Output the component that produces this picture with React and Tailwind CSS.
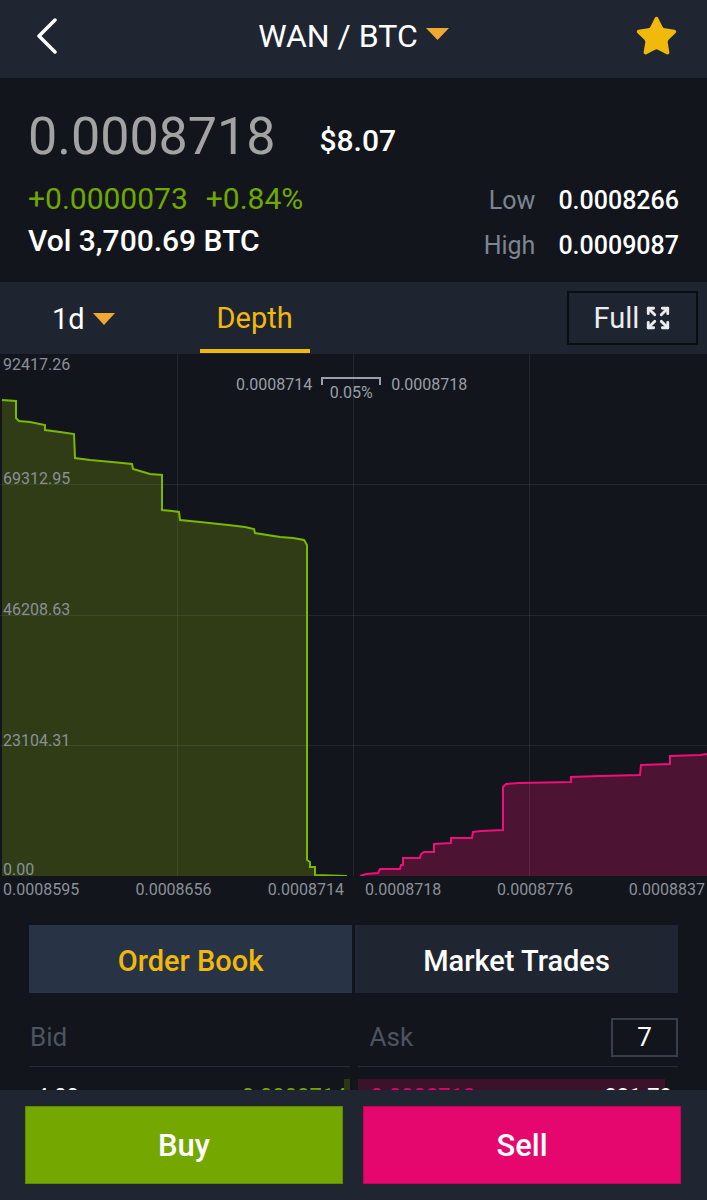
import { Star, Expand } from "lucide-react";

// depth curve points, in page coordinates (chart spans y 354..876)
const BASE = 876;
const bids = [
  [2, 400], [16, 401], [16, 418], [19, 421], [30, 422], [45, 425], [45, 430],
  [60, 432], [74, 434], [75, 458], [90, 460], [112, 462], [132, 464], [133, 469],
  [140, 471], [150, 474], [162, 475], [162, 510], [172, 511], [179, 512],
  [180, 520], [200, 522], [228, 525], [245, 527], [254, 529], [255, 533],
  [280, 537], [293, 538], [304, 540], [307, 545], [307, 860], [310, 862],
  [310, 867], [315, 867], [315, 875], [347, 876],
];
const asks = [
  [360, 876], [366, 874], [378, 873], [380, 869], [400, 869], [401, 865],
  [403, 865], [403, 858], [420, 858], [421, 854], [424, 852], [434, 852],
  [434, 844], [451, 843], [451, 838], [472, 838], [473, 832], [481, 831],
  [503, 830], [503, 787], [506, 784], [520, 783], [571, 782], [571, 777],
  [600, 776], [640, 775], [641, 765], [670, 764], [670, 756], [700, 755],
  [707, 754],
];

const toPath = (pts) => "M" + pts.map((p) => p.join(",")).join(" L");
const toArea = (pts) =>
  toPath(pts) + ` L${pts[pts.length - 1][0]},${BASE} L${pts[0][0]},${BASE} Z`;

const yLabels = [
  { text: "92417.26", top: "top-[3px]" },
  { text: "69312.95", top: "top-[117px]" },
  { text: "46208.63", top: "top-[248px]" },
  { text: "23104.31", top: "top-[379px]" },
  { text: "0.00", top: "top-[508px]" },
];

const DepthChart = () => (
  <div className="relative h-[522px]">
    <svg width="707" height="522" viewBox="0 354 707 522" className="block">
      <path d={toArea(bids)} fill="#2f3c16" />
      <path d={toArea(asks)} fill="#4d1333" />
      {[177, 353, 529].map((x) => (
        <line key={x} x1={x + 0.5} y1={354} x2={x + 0.5} y2={876} stroke="rgba(255,255,255,0.08)" />
      ))}
      {[484, 615, 745].map((y) => (
        <line key={y} x1={0} y1={y + 0.5} x2={707} y2={y + 0.5} stroke="rgba(255,255,255,0.08)" />
      ))}
      <path d={toPath(bids)} fill="none" stroke="#7ab800" strokeWidth="2" />
      <path d={toPath(asks)} fill="none" stroke="#ee0f79" strokeWidth="2" />
    </svg>

    {/* y axis labels */}
    {yLabels.map((l) => (
      <span
        key={l.text}
        className={`absolute left-[3px] ${l.top} text-[16px] leading-none text-[#8b9098]`}
      >
        {l.text}
      </span>
    ))}

    {/* spread marker */}
    <div className="absolute top-[23px] left-[236px] flex items-start text-[16px] leading-none text-[#9a9fa7]">
      <span>0.0008714</span>
      <div className="ml-[9px] w-[60px] flex flex-col">
        <div className="h-[8px] border-t-2 border-x-2 border-[#9a9fa7]" />
        <span className="text-center">0.05%</span>
      </div>
      <span className="ml-[10px]">0.0008718</span>
    </div>
  </div>
);

const App = () => {
  return (
    <div className="w-full h-[1200px] flex flex-col overflow-hidden bg-[#12161c] text-white font-['Roboto',sans-serif]">
      {/* Header */}
      <div className="h-[78px] shrink-0 bg-[#1f2632] grid grid-cols-[1fr_auto_1fr] items-center pb-[6px]">
        <div className="pl-[36px]">
          <svg width="22" height="36" viewBox="0 0 22 36">
            <polyline points="19,2 3,18 19,34" fill="none" stroke="#fff" strokeWidth="3.5" strokeLinecap="round" strokeLinejoin="round" />
          </svg>
        </div>
        <div className="flex items-center gap-[8px]">
          <span className="text-[32px] leading-none">WAN / BTC</span>
          <svg width="23" height="12" viewBox="0 0 23 12" className="-mt-[5px]">
            <polygon points="0,0 23,0 11.5,12" fill="#f0a832" />
          </svg>
        </div>
        <div className="flex justify-end pr-[28px]">
          <Star size={45} strokeWidth={1} color="#f0b90b" fill="#f0b90b" />
        </div>
      </div>

      {/* Price summary */}
      <div className="h-[204px] shrink-0 px-[28px] pt-[33px]">
        <div className="flex items-center h-[52px]">
          <span className="text-[52px] leading-none text-[#a3a3a3]">0.0008718</span>
          <span className="ml-[44px] mt-[8px] text-[30px] leading-none font-medium">$8.07</span>
        </div>
        <div className="flex justify-between mt-[21px]">
          <div className="flex flex-col gap-[12px]">
            <div className="flex gap-[18px] text-[30px] leading-none text-[#70a800]">
              <span>+0.0000073</span>
              <span>+0.84%</span>
            </div>
            <div className="text-[30px] leading-none font-medium">Vol 3,700.69 BTC</div>
          </div>
          <div className="grid grid-cols-[auto_auto] gap-x-[23px] gap-y-[20px] pt-[4px] text-[25px] leading-none">
            <span className="text-right text-[#7d8592]">Low</span>
            <span className="font-medium">0.0008266</span>
            <span className="text-right text-[#7d8592]">High</span>
            <span className="font-medium">0.0009087</span>
          </div>
        </div>
      </div>

      {/* Chart tabs */}
      <div className="h-[72px] shrink-0 bg-[#1e2530] flex items-stretch">
        <div className="flex items-center gap-[8px] pl-[52px] pt-[2px]">
          <span className="text-[29px] leading-none">1d</span>
          <svg width="22" height="12" viewBox="0 0 22 12">
            <polygon points="0,0 22,0 11,12" fill="#f0a832" />
          </svg>
        </div>
        <div className="ml-[85px] w-[110px] flex flex-col">
          <div className="flex-1 flex items-center justify-center pt-[6px] text-[29px] leading-none text-[#f0b90b]">
            Depth
          </div>
          <div className="h-[4px] mb-[1px] bg-[#f0b90b]" />
        </div>
        <div className="ml-auto mr-[9px] self-center w-[131px] h-[54px] border-2 border-[#0b0e11] flex items-center justify-center gap-[6px]">
          <span className="text-[29px] leading-none text-[#eaecef]">Full</span>
          <Expand size={26} strokeWidth={2.6} color="#eaecef" />
        </div>
      </div>

      <DepthChart />

      {/* x axis */}
      <div className="h-[29px] shrink-0 flex pt-[6px] text-[16px] leading-none text-[#8b9098]">
        <div className="w-[353px] flex justify-between pl-[3px] pr-[9px]">
          <span>0.0008595</span>
          <span>0.0008656</span>
          <span>0.0008714</span>
        </div>
        <div className="flex-1 flex justify-between pl-[12px] pr-[2px]">
          <span>0.0008718</span>
          <span>0.0008776</span>
          <span>0.0008837</span>
        </div>
      </div>

      {/* Order book */}
      <div className="flex-1 overflow-hidden pl-[29px] pr-[29px]">
        <div className="grid grid-cols-2 gap-[3px] mt-[20px] h-[68px]">
          <div className="bg-[#283445] flex items-center justify-center pt-[5px] text-[29px] font-medium text-[#f0b90b]">
            Order Book
          </div>
          <div className="bg-[#1f2631] flex items-center justify-center pt-[5px] text-[29px] font-medium">
            Market Trades
          </div>
        </div>
        <div className="grid grid-cols-2 gap-[8px] mt-[25px]">
          <div>
            <div className="h-[39px] flex items-center pl-[1px] text-[26px] text-[#4c5461]">Bid</div>
            <div className="mt-[9px] h-px bg-[#262b34]" />
            <div className="relative mt-[12px] h-[30px]">
              <div className="absolute right-0 top-0 bottom-0 bg-[#2b3614]" style={{ width: 6 }} />
              <div className="relative flex justify-between pt-[7px] pl-[7px] pr-[3px] text-[22px] leading-none">
                <span>4.00</span>
                <span className="text-[#70a800]">0.0008714</span>
              </div>
            </div>
          </div>
          <div>
            <div className="h-[39px] flex items-center justify-between pl-[12px]">
              <span className="text-[26px] text-[#4c5461]">Ask</span>
              <div className="w-[67px] h-[39px] border-2 border-[#373f4b] flex items-center justify-center text-[26px]">
                7
              </div>
            </div>
            <div className="mt-[9px] h-px bg-[#262b34]" />
            <div className="relative mt-[12px] h-[30px]">
              <div className="absolute left-0 top-0 bottom-0 bg-[#3b1229]" style={{ width: 307 }} />
              <div className="relative flex justify-between pt-[7px] pl-[13px] pr-[6px] text-[22px] leading-none">
                <span className="text-[#e6006e]">0.0008718</span>
                <span>221.79</span>
              </div>
            </div>
          </div>
        </div>
      </div>

      {/* Buy / Sell */}
      <div className="h-[110px] shrink-0 bg-[#1f2632] grid grid-cols-2 gap-[20px] pl-[25px] pr-[26px] pt-[16px]">
        <button className="h-[78px] pt-[3px] bg-[#74a800] border border-[#5e8c00] text-[31px] font-medium text-white">
          Buy
        </button>
        <button className="h-[78px] pt-[3px] bg-[#e5066e] border border-[#c4045d] text-[31px] font-medium text-white">
          Sell
        </button>
      </div>
    </div>
  );
};

export default App;
